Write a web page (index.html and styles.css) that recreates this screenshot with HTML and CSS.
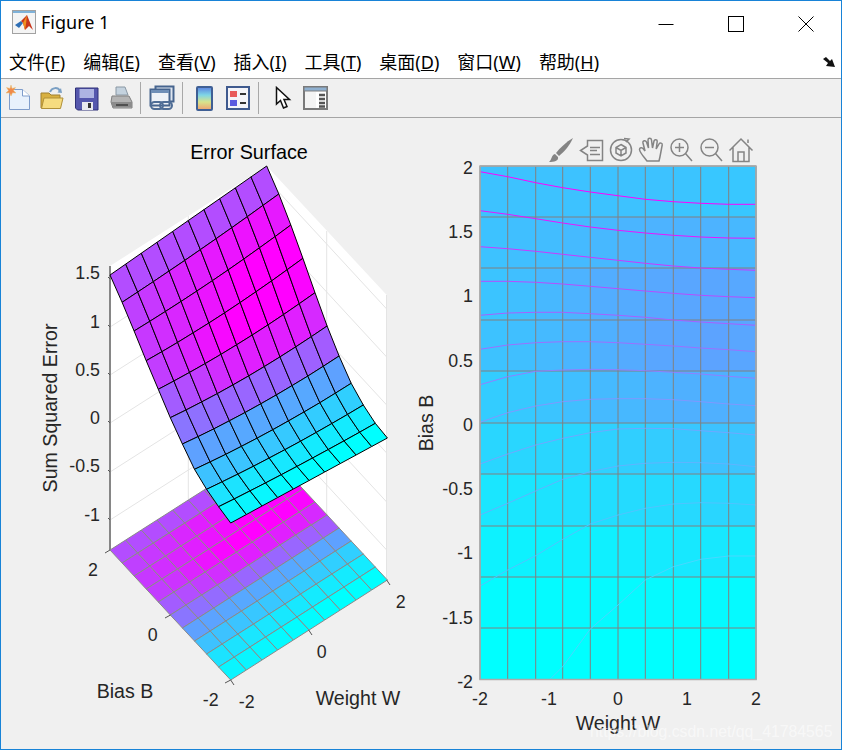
FILE: index.html
```html
<!DOCTYPE html>
<html lang="zh">
<head>
<meta charset="utf-8">
<title>Figure 1</title>
<link rel="stylesheet" href="styles.css">
</head>
<body>
<div class="window">
  <header class="titlebar">
    <svg class="app-icon" width="24" height="24" viewBox="0 0 24 24">
      <rect x="0.5" y="0.5" width="23" height="23" class="logo-frame"/>
      <rect x="1" y="1" width="22" height="2" class="logo-bar"/>
      <path d="M3 15 L9 11 L11 13 L7 18 Z" class="logo-blue"/>
      <path d="M9 11 L15 5 L21 20 L17 16 L13 20 L11 13 Z" class="logo-red"/>
      <path d="M11 13 L15 5 L14 14 L13 20 Z" class="logo-orange"/>
    </svg>
    <span class="title-text">Figure 1</span>
    <div class="win-buttons">
      <div class="win-btn"><svg width="16" height="16" viewBox="0 0 16 16"><path d="M0.5 8.5H15.5" class="win-glyph"/></svg></div>
      <div class="win-btn"><svg width="16" height="16" viewBox="0 0 16 16"><rect x="0.5" y="0.5" width="15" height="15" class="win-glyph"/></svg></div>
      <div class="win-btn"><svg width="16" height="16" viewBox="0 0 16 16"><path d="M0.5 0.5L15.5 15.5M15.5 0.5L0.5 15.5" class="win-glyph"/></svg></div>
    </div>
  </header>

  <nav class="menubar">
    <span class="menu-item">文件(<u>F</u>)</span>
    <span class="menu-item">编辑(<u>E</u>)</span>
    <span class="menu-item">查看(<u>V</u>)</span>
    <span class="menu-item">插入(<u>I</u>)</span>
    <span class="menu-item">工具(<u>T</u>)</span>
    <span class="menu-item">桌面(<u>D</u>)</span>
    <span class="menu-item">窗口(<u>W</u>)</span>
    <span class="menu-item">帮助(<u>H</u>)</span>
    <svg class="dock-arrow" width="13" height="11" viewBox="0 0 13 11">
      <path d="M0 2 L3 0 L7 4 L9 2 L12 10 L3 9 L5 6 Z" class="dock-fill"/>
    </svg>
  </nav>

  <div class="toolbar">
    <svg class="tool tool-new" width="26" height="26" viewBox="0 0 26 26">
      <path d="M4.5 4.5H17.5L24.5 11V24.5H4.5Z" class="page"/>
      <path d="M17.5 4.5V11H24.5" class="page-fold"/>
      <path d="M6 0 L7 3.5 L10.5 2.5 L8.5 5.5 L11 8 L7.5 7.8 L6 11 L4.5 7.8 L1 8 L3.5 5.5 L1.5 2.5 L5 3.5 Z" class="star"/>
    </svg>
    <svg class="tool tool-open" width="24" height="26" viewBox="0 0 24 26">
      <path d="M1 8H9L11 10H20V23H1Z" class="folder-back"/>
      <path d="M1.5 23.5L4 13H23L20.5 23.5Z" class="folder-front"/>
      <path d="M10 7C12 2 18 2 20 6" class="open-arrow"/>
      <path d="M17.5 7.5L22 8L21 3Z" class="open-head"/>
    </svg>
    <svg class="tool tool-save" width="24" height="26" viewBox="0 0 24 26">
      <path d="M0.500 3H23V25H2.500L0.500 23Z" class="disk"/>
      <rect x="4.500" y="4" width="14.500" height="9" class="disk-label"/>
      <rect x="7" y="17" width="11" height="8" class="disk-slot"/>
      <rect x="13" y="18" width="3" height="5" class="disk-hole"/>
    </svg>
    <svg class="tool tool-print" width="24" height="26" viewBox="0 0 24 26">
      <path d="M6 2H15L18 10H6Z" class="paper"/>
      <path d="M2 11H19L22 17V23H3L1 17Z" class="printer"/>
      <path d="M1 17H22V22H3Z" class="printer-low"/>
      <rect x="6" y="19" width="12" height="2" class="printer-slot"/>
    </svg>
    <span class="tool-sep"></span>
    <svg class="tool tool-link" width="26" height="26" viewBox="0 0 26 26">
      <rect x="6.5" y="1.5" width="18" height="15" class="win-back"/>
      <rect x="1.5" y="4.5" width="19" height="16" class="win-front"/>
      <rect x="2" y="5" width="18" height="3" class="win-head"/>
      <rect x="2" y="17" width="12" height="7" rx="3.5" class="chain"/>
      <rect x="11" y="17" width="12" height="7" rx="3.5" class="chain"/>
    </svg>
    <span class="tool-sep"></span>
    <svg class="tool tool-cbar" width="17" height="25" viewBox="0 0 17 25">
      <defs>
        <linearGradient id="cbar" x1="0" y1="0" x2="0" y2="1">
          <stop offset="0" stop-color="#5a7fe0"/>
          <stop offset="0.35" stop-color="#7fd6e6"/>
          <stop offset="0.65" stop-color="#d8e48c"/>
          <stop offset="1" stop-color="#f0a070"/>
        </linearGradient>
      </defs>
      <rect x="1" y="1" width="15" height="23" rx="1" class="cbar-rect"/>
    </svg>
    <svg class="tool tool-legend" width="24" height="24" viewBox="0 0 24 24">
      <rect x="1" y="1" width="22" height="22" class="legend-box"/>
      <rect x="4" y="5" width="7" height="6" class="legend-red"/>
      <rect x="4" y="14" width="7" height="6" class="legend-blue"/>
      <path d="M14 8H20M14 17H20" class="legend-dash"/>
    </svg>
    <span class="tool-sep"></span>
    <svg class="tool tool-cursor" width="17" height="24" viewBox="0 0 17 24">
      <path d="M1.5 1.5V18L5.5 14.5L8.5 22L12 20.5L9 13.5H14.5Z" class="cursor"/>
    </svg>
    <svg class="tool tool-panel" width="25" height="24" viewBox="0 0 25 24">
      <rect x="1" y="1" width="23" height="22" class="panel-box"/>
      <rect x="1" y="1" width="23" height="4" class="panel-head"/>
      <rect x="2" y="6" width="11" height="16" class="panel-left"/>
      <path d="M16 9H22M16 13H22M16 17H22M16 20.5H22" class="panel-lines"/>
    </svg>
  </div>

  <main class="figure">
    <svg id="surface-plot" class="plot" width="410" height="631" viewBox="1 118 410 631">
      <g id="walls"></g>
      <g id="base"></g>
      <path d="M110 266V550" class="z-axis"/>
      <path d="M108 277L110 279M108 325L110 327M108 373L110 375M108 421L110 423M108 470L110 472M108 518L110 520
               M105 553L110 550M165 618L170.5 615M225 683L230.7 680
               M230.7 680L234 685M308.7 630L312 635M386.7 580L390 585" class="tick"/>
      <g id="surface"></g>
      <text x="249" y="159" class="title">Error Surface</text>
      <text x="100" y="279" class="tk end">1.5</text>
      <text x="100" y="328" class="tk end">1</text>
      <text x="100" y="376" class="tk end">0.5</text>
      <text x="100" y="424" class="tk end">0</text>
      <text x="100" y="472" class="tk end">-0.5</text>
      <text x="100" y="521" class="tk end">-1</text>
      <text x="93" y="576" class="tk mid">2</text>
      <text x="152.7" y="641" class="tk mid">0</text>
      <text x="210.7" y="706" class="tk mid">-2</text>
      <text x="246.7" y="708" class="tk mid">-2</text>
      <text x="321.7" y="658" class="tk mid">0</text>
      <text x="400.7" y="608" class="tk mid">2</text>
      <text x="0" y="0" class="lbl mid" transform="translate(57 408) rotate(-90)">Sum Squared Error</text>
      <text x="125" y="698" class="lbl mid">Bias B</text>
      <text x="358" y="705" class="lbl mid">Weight W</text>
    </svg>

    <svg id="contour-plot" class="plot" width="430" height="631" viewBox="411 118 430 631">
      <g id="cells"></g>
      <g id="grid"></g>
      <g id="contours"></g>
      <rect x="480" y="166" width="276" height="513.5" class="frame"/>
      <text x="473" y="174" class="tk end">2</text>
      <text x="473" y="238" class="tk end">1.5</text>
      <text x="473" y="302" class="tk end">1</text>
      <text x="473" y="367" class="tk end">0.5</text>
      <text x="473" y="431" class="tk end">0</text>
      <text x="473" y="495" class="tk end">-0.5</text>
      <text x="473" y="559" class="tk end">-1</text>
      <text x="473" y="624" class="tk end">-1.5</text>
      <text x="473" y="688" class="tk end">-2</text>
      <text x="480" y="705" class="tk mid">-2</text>
      <text x="549" y="705" class="tk mid">-1</text>
      <text x="618" y="705" class="tk mid">0</text>
      <text x="687" y="705" class="tk mid">1</text>
      <text x="756" y="705" class="tk mid">2</text>
      <text x="618" y="730" class="lbl mid">Weight W</text>
      <text x="0" y="0" class="lbl mid" transform="translate(433 423) rotate(-90)">Bias B</text>

      <g class="modebar">
        <path d="M573 138C566 142 560 148 556 153L559 156C564 152 570 145 573 138Z" class="mb-fill"/>
        <path d="M555 154C551 155 552 160 549 162C554 162 559 161 558 157Z" class="mb-fill"/>
        <path d="M587.5 140.500H602.500V160.500H587.500V155L580.500 150.500L587.500 146Z" class="mb"/>
        <path d="M590 147.500H600M590 150.500H597M590 154.500H600" class="mb"/>
        <circle cx="621" cy="150" r="10.500" class="mb"/>
        <path d="M621 144.500L626 147.500V153L621 156L616 153V147.500ZM616 147.500L621 150.500L626 147.500M621 150.500V156" class="mb"/>
        <path d="M624 138.500L629 139L626 142" class="mb"/>
        <path d="M647 161C644 157 640 153 639.500 149.500C639.500 147.500 642 147 643.500 149L645 151L643 143C642.500 140.500 645.500 140 646.500 142L648.500 148L648 140C648 137.800 651.200 137.800 651.500 140L652.500 148L654 141C654.500 139 657.500 139.500 657.200 141.500L656.200 149L659 144C660 142.300 662.700 143 662.200 145L660.500 154C660 157 659.500 159 659 161Z" class="mb"/>
        <circle cx="679.500" cy="147.500" r="8.500" class="mb"/>
        <path d="M685.500 153.500L692 161M675 147.500H684M679.500 143V152" class="mb"/>
        <circle cx="709.500" cy="147.500" r="8.500" class="mb"/>
        <path d="M715.500 153.500L722 161M705 147.500H714" class="mb"/>
        <path d="M729.500 150.500L741 139L752.500 150.500M733 147.500V161.500H749V147.500M738 161.500V152H744V161.500M748 139.500V143" class="mb"/>
      </g>
    </svg>
    <div class="watermark">https://blog.csdn.net/qq_41784565</div>
  </main>
</div>
<script src="app.js"></script>
</body>
</html>
```

FILE: styles.css
```css
* { box-sizing: border-box; }
html, body { margin: 0; padding: 0; }
body { width: 842px; height: 750px; overflow: hidden; background: #f0f0f0; }

.window {
  width: 842px;
  height: 750px;
  display: flex;
  flex-direction: column;
  border: 1px solid #1883d7;
  background: #fff;
  font-family: "Noto Sans", "Noto Sans CJK SC", sans-serif;
  color: #000;
}

.titlebar {
  height: 45px;
  display: flex;
  align-items: center;
  padding-left: 11px;
  flex: none;
}
.title-text { font-size: 18px; margin-left: 5px; margin-top: -3px; line-height: 24px; }
.app-icon { display: block; margin-top: -3px; }
.logo-frame { fill: #f4f4f4; stroke: #a2a2a2; }
.logo-bar { fill: #7fb2d9; }
.logo-blue { fill: #2f6fb5; }
.logo-red { fill: #c9361c; }
.logo-orange { fill: #f09020; }

.win-buttons { margin-left: auto; display: flex; }
.win-btn { width: 70px; height: 45px; display: flex; align-items: center; justify-content: center; }
.win-glyph { fill: none; stroke: #000; stroke-width: 1; }

.menubar {
  height: 32px;
  display: flex;
  align-items: center;
  gap: 18px;
  padding-left: 8px;
  flex: none;
  font-size: 18px;
  line-height: 32px;
  white-space: nowrap;
}
.menu-item { display: block; }
.dock-arrow { margin-left: auto; margin-right: 5px; }
.dock-fill { fill: #111; }

.toolbar {
  height: 40px;
  flex: none;
  display: flex;
  align-items: center;
  padding-left: 4px;
  background: #f0f0f0;
  border-top: 1px solid #a5a5a5;
  border-bottom: 1px solid #a5a5a5;
}
.tool { display: block; flex: none; }
.tool-new { margin-right: 9px; }
.tool-open { margin-right: 11px; }
.tool-save { margin-right: 11px; }
.tool-print { margin-right: 6px; }
.tool-link { margin: 0 7px 0 8px; }
.tool-cbar { margin: 0 13px 0 13px; }
.tool-legend { margin-right: 8px; }
.tool-cursor { margin: 0 11px 0 16px; }
.tool-sep { width: 1px; height: 32px; background: #a8a8a8; flex: none; }

.page { fill: #e8f1fc; stroke: #7f9dcb; }
.page-fold { fill: #fff; stroke: #7f9dcb; }
.star { fill: #f08a4a; stroke: #e8c070; stroke-width: 0.5; }
.folder-back { fill: #d8b040; stroke: #a08030; }
.folder-front { fill: #f6dc80; stroke: #b09038; }
.open-arrow { fill: none; stroke: #7ba0c4; stroke-width: 2; }
.open-head { fill: #7ba0c4; }
.disk { fill: #5557ad; stroke: #2f3178; }
.disk-label { fill: #aeb4e2; }
.disk-slot { fill: #e8e8ee; }
.disk-hole { fill: #333; }
.paper { fill: #c4d2de; stroke: #8a98a4; }
.printer { fill: #b4b4b4; stroke: #808080; }
.printer-low { fill: #8c8c8c; }
.printer-slot { fill: #505050; }
.win-back { fill: #dfe6f0; stroke: #46648e; stroke-width: 2; }
.win-front { fill: #eef2f8; stroke: #46648e; stroke-width: 2; }
.win-head { fill: #6f8fb8; }
.chain { fill: none; stroke: #4f6d96; stroke-width: 2; }
.cbar-rect { fill: url(#cbar); stroke: #3f5f94; stroke-width: 2; }
.legend-box { fill: #f4f4f8; stroke: #3f5a8e; stroke-width: 2; }
.legend-red { fill: #e85a5a; }
.legend-blue { fill: #5a5ae0; }
.legend-dash { stroke: #333; stroke-width: 2; }
.cursor { fill: #fff; stroke: #111; stroke-width: 1.500; }
.panel-box { fill: #fff; stroke: #7a7a7a; stroke-width: 2; }
.panel-head { fill: #8fb0d0; stroke: #7a7a7a; }
.panel-left { fill: #f4f4f4; }
.panel-lines { stroke: #555; stroke-width: 2.500; }

.figure {
  flex: 1;
  position: relative;
  display: flex;
  background: #f0f0f0;
  min-height: 0;
}
.plot { display: block; flex: none; overflow: hidden; }

.plot text { font-family: "Liberation Sans", Arial, sans-serif; fill: #262626; }
.title { font-size: 19.800px; text-anchor: middle; fill: #000 !important; }
.tk { font-size: 17.800px; }
.lbl { font-size: 19.600px; }
.end { text-anchor: end; }
.mid { text-anchor: middle; }

.wall { fill: #fff; stroke: none; }
.wall-grid { fill: none; stroke: #e4e4e4; stroke-width: 1; }
.z-axis { fill: none; stroke: #868686; stroke-width: 2; }
.tick { fill: none; stroke: #555; stroke-width: 1; }
.base-cell { stroke: #8a8a8a; stroke-width: 1; stroke-linejoin: round; }
.surf-cell { stroke: #000; stroke-width: 1; stroke-linejoin: round; }
.grid-line { stroke: #808080; stroke-width: 1; }
.contour { fill: none; stroke-width: 1; }
.frame { fill: none; stroke: #ababab; stroke-width: 1.500; }

.mb { fill: none; stroke: #848484; stroke-width: 1.500; }
.mb-fill { fill: #848484; }

.watermark {
  position: absolute;
  left: 589px;
  top: 604px;
  font-family: "Liberation Sans", Arial, sans-serif;
  font-size: 15.800px;
  line-height: 20px;
  color: rgba(255, 255, 255, 0.55);
  white-space: nowrap;
}
```

FILE: app.js
```js
(function () {
  var NS = "http://www.w3.org/2000/svg";

  function el(parent, tag, cls, attrs) {
    var n = document.createElementNS(NS, tag);
    n.setAttribute("class", cls);
    for (var k in attrs) n.setAttribute(k, attrs[k]);
    parent.appendChild(n);
    return n;
  }
  function cool(t) {
    return "rgb(" + Math.round(t * 255) + "," + Math.round((1 - t) * 255) + ",255)";
  }

  /* ---------- 3-D surface: projected page coordinates ---------- */
  function bx(i, j) { return 110 + i * 15.67 + j * 12.07; } /* i: W index, j: row from B=2 */
  function by(i, j) { return 550 - i * 10 + j * 13; }

  var hLeft = [275, 260.7, 245, 228.3, 212.7, 197.3, 184, 171.7, 164.7, 160.3, 157];
  var hRight = [284, 269, 251, 230.7, 209.3, 189, 172, 157.7, 149, 143.7, 142];

  function sy(i, j) {
    var u = i / 10;
    var w = 2 * u - 1, b = 1 - j / 5;
    var bump = 4 * (1 - w * w) * (1 - b * b);
    return by(i, j) - (hLeft[j] + (hRight[j] - hLeft[j]) * u - bump);
  }

  var colors3d = [
    [.70, .70, .70, .70, .70, .70, .70, .70, .70, .70],
    [.75, .78, .82, .85, .88, .90, .92, .93, .93, .90],
    [.78, .82, .85, .88, .92, .95, 1, 1, 1, 1],
    [.76, .80, .86, .92, .97, 1, 1, 1, 1, .98],
    [.64, .70, .76, .82, .86, .88, .88, .88, .88, .84],
    [.54, .56, .58, .60, .60, .60, .60, .60, .62, .64],
    [.37, .36, .35, .34, .34, .34, .34, .34, .35, .37],
    [.24, .24, .23, .22, .22, .21, .20, .20, .19, .19],
    [.11, .11, .10, .10, .09, .09, .08, .08, .08, .08],
    [.04, .04, .03, .02, .01, .01, 0, 0, 0, 0]
  ];

  /* walls */
  var walls = document.getElementById("walls");
  el(walls, "polygon", "wall", { points: "110,266 266.7,166 386.7,295 386.7,580 266.7,450 110,550" });
  [279, 327, 375, 423, 472, 520].forEach(function (y) {
    el(walls, "polyline", "wall-grid", {
      points: "110," + y + " 266.7," + (y - 100) + " 386.7," + (y + 30)
    });
  });
  el(walls, "path", "wall-grid", { d: "M188.300 216V500M326.700 231V515M386.500 295V580" });

  /* floor + surface facets */
  var base = document.getElementById("base");
  var surface = document.getElementById("surface");
  for (var j = 0; j < 10; j++) {
    for (var i = 0; i < 10; i++) {
      var c = cool(colors3d[j][i]);
      el(base, "polygon", "base-cell", {
        fill: c,
        points: [[i, j], [i + 1, j], [i + 1, j + 1], [i, j + 1]].map(function (p) {
          return bx(p[0], p[1]).toFixed(1) + "," + by(p[0], p[1]).toFixed(1);
        }).join(" ")
      });
      el(surface, "polygon", "surf-cell", {
        fill: c,
        points: [[i, j], [i + 1, j], [i + 1, j + 1], [i, j + 1]].map(function (p) {
          return bx(p[0], p[1]).toFixed(1) + "," + sy(p[0], p[1]).toFixed(1);
        }).join(" ")
      });
    }
  }

  /* ---------- contour plot ---------- */
  var xs = [480, 507.7, 535.7, 562.7, 590.3, 618, 645.3, 673.3, 700.7, 728.7, 756];
  var ys = [166, 217, 268, 320, 371, 423, 474, 526, 577, 628, 679.5];
  var cells2d = [
    [.24, .24, .24, .24, .24, .24, .24, .23, .22, .22],
    [.24, .25, .26, .27, .28, .29, .30, .30, .30, .28],
    [.23, .25, .28, .30, .32, .33, .34, .35, .35, .34],
    [.24, .25, .27, .29, .31, .33, .35, .35, .36, .35],
    [.20, .21, .23, .25, .27, .28, .30, .31, .31, .30],
    [.16, .16, .16, .16, .18, .19, .20, .22, .24, .23],
    [.10, .10, .11, .12, .13, .14, .14, .15, .16, .16],
    [.05, .05, .05, .06, .06, .07, .08, .09, .09, .08],
    [.015, .015, .015, .02, .02, .02, .02, .02, .02, .02],
    [0, 0, 0, 0, 0, 0, 0, 0, 0, 0]
  ];
  var cells = document.getElementById("cells");
  for (var r = 0; r < 10; r++) {
    for (var q = 0; q < 10; q++) {
      el(cells, "rect", "cell", {
        x: xs[q], y: ys[r], width: xs[q + 1] - xs[q] + 0.5, height: ys[r + 1] - ys[r] + 0.5,
        fill: cool(cells2d[r][q])
      });
    }
  }
  var grid = document.getElementById("grid");
  xs.forEach(function (x) { el(grid, "line", "grid-line", { x1: x, x2: x, y1: 166, y2: 679.5 }); });
  ys.forEach(function (y) { el(grid, "line", "grid-line", { x1: 480, x2: 756, y1: y, y2: y }); });

  /* contour traces, read as zoomed-crop coordinates (3x) */
  function top(list) { return list.map(function (y, k) { return [xs[k], 160 + y / 3]; }); }
  function low(list) { return list.map(function (p) { return [430 + p[0] / 3, 440 + p[1] / 3]; }); }
  var lines = [
    ["#ff00ff", top([35, 50, 68, 83, 96, 107, 118, 125, 130, 133, 133])],
    ["#ea14ff", top([152, 163, 176, 189, 201, 211, 219, 226, 231, 234, 235])],
    ["#cc38ff", top([260, 266, 274, 283, 292, 301, 310, 318, 324, 328, 331])],
    ["#b84cff", top([364, 364, 367, 372, 379, 386, 393, 400, 406, 410, 413])],
    ["#a860ff", top([466, 459, 457, 457, 461, 466, 472, 480, 486, 491, 496])],
    ["#9c70ff", top([568, 555, 548, 545, 545, 548, 553, 558, 564, 569, 575])],
    ["#9080ff", top([674, 650, 634, 630, 628, 629, 632, 637, 642, 649, 655])],
    ["#8098ff", top([787, 758, 738, 725, 718, 716, 716, 719, 725, 732, 737])],
    ["#70a8ff", low([[150, 72], [233, 42], [317, 15], [398, -5], [481, -22], [564, -33], [646, -35], [730, -34], [812, -28], [896, -22], [978, -15]])],
    ["#60b4ff", low([[150, 225], [233, 190], [317, 153], [398, 118], [481, 95], [564, 78], [646, 70], [730, 67], [812, 68], [896, 72], [978, 80]])],
    ["#50c4ff", low([[150, 438], [233, 390], [317, 347], [398, 298], [481, 252], [564, 225], [646, 205], [730, 192], [812, 188], [896, 190], [978, 195]])],
    ["#48d8ff", low([[360, 718], [398, 680], [481, 567], [564, 495], [646, 420], [730, 380], [812, 358], [896, 348], [978, 348]])]
  ];
  var contours = document.getElementById("contours");
  lines.forEach(function (l) {
    el(contours, "polyline", "contour", {
      stroke: l[0],
      points: l[1].map(function (p) { return p[0].toFixed(1) + "," + p[1].toFixed(1); }).join(" ")
    });
  });
})();
```
